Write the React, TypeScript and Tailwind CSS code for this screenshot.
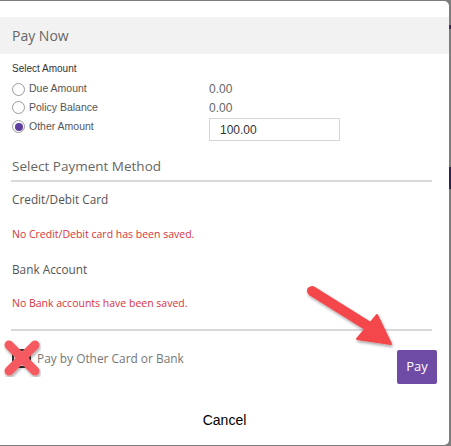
import React from "react";

const sans = "font-['Open_Sans','Noto_Sans',sans-serif]";
const arial = "font-['Liberation_Sans',Arial,sans-serif]";

function Radio({ checked }: { checked?: boolean }) {
	return (
		<span className="w-[13px] h-[13px] rounded-full border border-[#9a9a9a] bg-white flex items-center justify-center shrink-0">
			{checked && <span className="w-[8px] h-[8px] rounded-full bg-[#5e3fa0]" />}
		</span>
	);
}

export default function App() {
	const amounts = [
		{ label: "Due Amount", value: "0.00" },
		{ label: "Policy Balance", value: "0.00" },
	];

	return (
		<div className="w-[451px] h-[446px] bg-[#7d7d7d] flex pt-px overflow-hidden relative">
			<div className="flex-1 h-[444px] bg-white rounded-tr-[5px] rounded-br-[5px] flex flex-col pt-4">
				{/* header */}
				<div className={`h-[37px] shrink-0 bg-[#f2f2f2] flex items-center px-3 text-[14px] text-[#666] ${sans}`}>Pay Now</div>

				{/* amounts */}
				<div className={`px-3 pt-[8px] ${arial} text-[#555]`}>
					<div className="text-[10px] leading-[14px] text-[#333]">Select Amount</div>
					<div className="flex flex-col mt-[4px]">
						{amounts.map((a) => (
							<div key={a.label} className="flex items-center h-[18.5px] text-[10.5px]">
								<div className="w-[197px] flex items-center gap-[4px]">
									<Radio />
									<span>{a.label}</span>
								</div>
								<span className="text-[#666] text-[12px]">{a.value}</span>
							</div>
						))}
						<div className="flex items-start h-[23px] text-[10.5px]">
							<div className="w-[197px] h-[19px] flex items-center gap-[4px]">
								<Radio checked />
								<span>Other Amount</span>
							</div>
							<div className="mt-px w-[131px] h-[23px] border border-[#d6d6d6] flex items-center px-[10px] text-[12px] text-[#333]">100.00</div>
						</div>
					</div>
				</div>

				{/* payment method */}
				<div className={`pl-[11px] pr-[17px] mt-[16px] ${sans}`}>
					<div className="pb-[4px] border-b-2 border-[#d9d9d9] text-[13.5px] leading-[20px] text-[#666] pl-px">Select Payment Method</div>
					<div className="pl-px pt-[8px] text-[11.8px] leading-[18px] text-[#555]">Credit/Debit Card</div>
					<div className="pl-px mt-[18px] text-[10.5px] leading-[16px] text-[#d7343a]">No Credit/Debit card has been saved.</div>
					<div className="pl-px mt-[18px] text-[11.8px] leading-[18px] text-[#555]">Bank Account</div>
					<div className="pl-px mt-[17px] text-[10.5px] leading-[16px] text-[#d7343a] pb-[18px] border-b-2 border-[#d9d9d9]">
						No Bank accounts have been saved.
					</div>
				</div>

				<div className={`flex pl-3 pr-[12px] ${sans}`}>
					<div className="flex items-center gap-[6px] h-[19px] mt-[18px]">
						<span className="w-[19px] h-[19px] rounded-[4px] border-2 border-[#333] bg-white" />
						<span className="text-[11.9px] text-[#777]">Pay by Other Card or Bank</span>
					</div>
					<div className="flex-1" />
					<button className="mt-[19px] w-[40px] h-[34px] rounded-[2px] bg-[#6e4ba5] text-white text-[13px]">Pay</button>
				</div>

				<div className={`flex justify-center mt-[28px] ${arial} text-[14px] leading-[16px] text-black`}>Cancel</div>
			</div>

			{/* backdrop strip */}
			<div className="w-[2px] flex flex-col">
				<div className="h-[24px]" />
				<div className="h-[4px] bg-[#3a2a60]" />
				<div className="h-[138px]" />
				<div className="h-[22px] bg-[#2c2350]" />
			</div>

			{/* annotation marks */}
			<svg className="absolute left-0 top-0 pointer-events-none" width="451" height="446">
				<defs>
					<filter id="sh" x="-20%" y="-20%" width="140%" height="140%">
						<feDropShadow dx="1" dy="2" stdDeviation="1.5" floodColor="#000" floodOpacity="0.35" />
					</filter>
				</defs>
				<g filter="url(#sh)">
					<line x1="312" y1="291" x2="368" y2="326" stroke="#f4464b" strokeWidth="10" strokeLinecap="round" />
					<polygon points="357,339 377,315 391,344" fill="#f4464b" stroke="#f4464b" strokeWidth="2" strokeLinejoin="round" />
				</g>
				<g filter="url(#sh)" strokeLinecap="round">
					<line x1="9" y1="345" x2="35" y2="371" stroke="#f45a5f" strokeWidth="9" />
					<line x1="35" y1="345" x2="9" y2="371" stroke="#f45a5f" strokeWidth="9" />
				</g>
			</svg>
		</div>
	);
}
